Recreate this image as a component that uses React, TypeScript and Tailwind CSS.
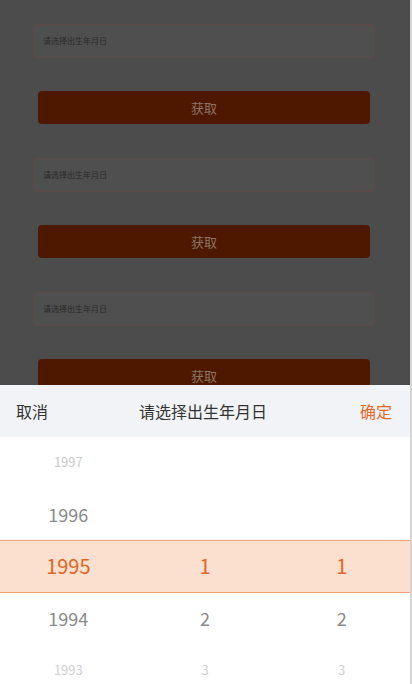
const font = { fontFamily: '"Noto Sans CJK SC", "Noto Sans", sans-serif' };

function BirthForm() {
  return (
    <div>
      <div className="ml-[33px] mr-[35px] flex h-[34px] items-center rounded-[4px] border border-[#5e4a44] bg-[#4f4f4f] px-[9px] text-[8px] text-[#2a2a2a]">
        请选择出生年月日
      </div>
      <div className="ml-[38px] mr-[40px] mt-[33px] mb-[34px] flex h-[33px] items-center justify-center rounded-[4px] bg-[#4e1800] text-[13px] text-[#8a7466]">
        获取
      </div>
    </div>
  );
}

const years = [
  { text: "1997", cls: "text-[13px] text-[#c9c9c9]" },
  { text: "1996", cls: "text-[18px] text-[#8a8a8a]" },
  { text: "1995", cls: "text-[20px] text-[#e0661f]" },
  { text: "1994", cls: "text-[18px] text-[#8a8a8a]" },
  { text: "1993", cls: "text-[13px] text-[#cfcfcf]" },
];

const days = [
  { text: "", cls: "" },
  { text: "", cls: "" },
  { text: "1", cls: "text-[20px] text-[#e0661f]" },
  { text: "2", cls: "text-[18px] text-[#8a8a8a]" },
  { text: "3", cls: "text-[13px] text-[#cfcfcf]" },
];

function Column({ items }: { items: { text: string; cls: string }[] }) {
  return (
    <div className="flex flex-1 flex-col">
      {items.map((item, i) => (
        <div key={i} className={`flex h-[52px] items-center justify-center ${item.cls}`}>
          {item.text}
        </div>
      ))}
    </div>
  );
}

export default function App() {
  return (
    <div className="relative h-[684px] overflow-hidden border-r-2 border-[#d4d4d4] bg-[#4c4c4c]" style={font}>
      <div className="pt-[24px]">
        <BirthForm />
        <BirthForm />
        <BirthForm />
      </div>

      {/* date picker sheet */}
      <div className="absolute inset-x-0 bottom-0 h-[299px] overflow-hidden bg-white">
        <div className="flex h-[52px] items-center justify-between bg-[#f2f3f7] pl-[16px] pr-[18px] text-[16px] text-[#333]">
          <span>取消</span>
          <span className="pr-[2px]">请选择出生年月日</span>
          <span className="text-[#e66a26]">确定</span>
        </div>
        <div className="relative">
          <div className="absolute inset-x-0 top-[103px] h-[53px] border-y border-[#f0a274] bg-[#fbe0cf]" />
          <div className="relative flex -translate-y-[1px]">
            <Column items={years} />
            <Column items={days} />
            <Column items={days} />
          </div>
        </div>
      </div>
    </div>
  );
}
